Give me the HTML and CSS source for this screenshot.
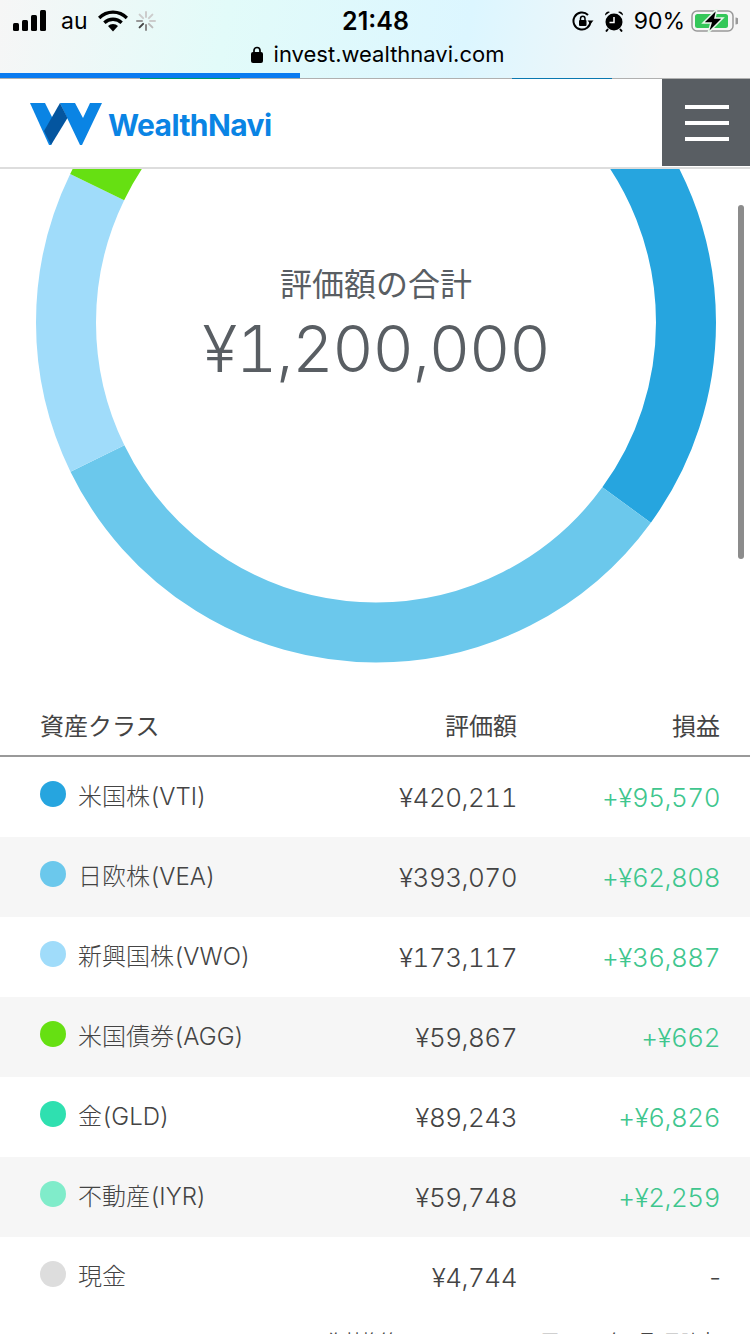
FILE: index.html
```html
<!DOCTYPE html>
<html lang="ja">
<head>
    <meta charset="UTF-8">
    <meta name="viewport" content="width=device-width, initial-scale=1.0">
    <title>WealthNavi</title>
    <link rel="stylesheet" href="styles.css">
</head>
<body>
    <div class="page">
        <div class="browser-bar">
            <div class="status-row">
                <div class="status-left">
                    <svg class="signal" width="34" height="22" viewBox="0 0 34 22"><rect x="0" y="13" width="6" height="8" rx="1.5"/><rect x="9" y="10" width="6" height="11" rx="1.5"/><rect x="18" y="5" width="6" height="16" rx="1.5"/><rect x="27" y="0" width="6" height="21" rx="1.5"/></svg>
                    <span class="carrier">au</span>
                    <svg class="wifi" width="30" height="22" viewBox="0 0 30 22"><path d="M15 21.500l-5-5.500a7 7 0 0 1 10 0z"/><path d="M15 7.500a14 14 0 0 1 9.800 4l-2.300 2.500a10.800 10.800 0 0 0-15 0l-2.300-2.500a14 14 0 0 1 9.800-4z"/><path d="M15 .500a21 21 0 0 1 15 6.200l-2.300 2.500a17.600 17.600 0 0 0-25.400 0L0 6.700a21 21 0 0 1 15-6.200z"/></svg>
                    <svg class="spinner" width="20" height="20" viewBox="0 0 20 20" stroke-width="2" stroke-linecap="round"><path d="M10 1v5" stroke="#ccc"/><path d="M16.400 3.600l-3.500 3.500" stroke="#ccc"/><path d="M19 10h-5" stroke="#ccc"/><path d="M16.400 16.400l-3.500-3.500" stroke="#bbb"/><path d="M10 19v-5" stroke="#888"/><path d="M3.600 16.400l3.500-3.500" stroke="#444"/><path d="M1 10h5" stroke="#999"/><path d="M3.600 3.600l3.500 3.500" stroke="#ccc"/></svg>
                </div>
                <div class="clock">21:48</div>
                <div class="status-right">
                    <svg width="22" height="22" viewBox="0 0 22 22"><path d="M18.500 11a8.500 8.500 0 1 1-2.500-6" fill="none" stroke="#000" stroke-width="2"/><path d="M21.500 10.500h-6l3 3.500z"/><rect x="7" y="10" width="7.500" height="6" rx="1"/><path d="M8.500 10V8.500a2.200 2.200 0 0 1 4.500 0V10" fill="none" stroke="#000" stroke-width="1.500"/></svg>
                    <svg class="alarm" width="20" height="22" viewBox="0 0 20 22"><circle cx="10" cy="12" r="8.500"/><path d="M1 5.500a3.500 3.500 0 0 1 5-3.500zM19 5.500a3.500 3.500 0 0 0-5-3.500z"/><path d="M10 7v5.500H5.500" fill="none" stroke="#fff" stroke-width="1.500"/><path d="M4 19l-2 2.500M16 19l2 2.500" stroke="#000" stroke-width="2"/></svg>
                    <span class="battery-text">90%</span>
                    <svg width="47" height="24" viewBox="0 0 47 24"><rect x="1" y="2" width="41" height="20" rx="5" fill="none" stroke="#999" stroke-width="1.500"/><rect x="4" y="5" width="33" height="14" rx="2.500" fill="#34c759"/><path d="M44.500 8.500a3.500 3.500 0 0 1 0 7z" fill="#999"/><path d="M26 0L12 14h8l-3 10 15-15h-8z" stroke="#e8f8ec" stroke-width="1.500"/></svg>
                </div>
            </div>
            <div class="url-row">
                <svg width="12" height="17" viewBox="0 0 12 17"><rect x="0" y="6" width="12" height="11" rx="2"/><path d="M3 7V4.500a3 3 0 0 1 6 0V7" fill="none" stroke="#000" stroke-width="1.700"/></svg>
                <span>invest.wealthnavi.com</span>
            </div>
            <div class="progress"><div class="progress-fill"></div></div>
            <div class="bar-line"></div>
        </div>

        <header class="site-header">
            <a class="logo">
                <svg width="73" height="43" viewBox="0 0 73 43"><path d="M0 0H15L28 26 21 42H19z" fill="#0a84e4"/><path d="M30 0H45L53 15 60 0H72L52 42H50z" fill="#0a84e4"/><path d="M30 0L37.500 15 21 42 14 28z" fill="#04559f"/></svg>
                <span>WealthNavi</span>
            </a>
            <div class="menu-btn"><i></i><i></i><i></i></div>
        </header>

        <section class="chart">
            <svg class="donut" width="750" height="520" viewBox="0 169 750 520">
                <g fill="none" stroke-width="60" transform="rotate(-90 376 322.500)">
                    <circle cx="376" cy="322.500" r="310" pathLength="100" stroke="#26a5df" stroke-dasharray="35.02 100"/>
                    <circle cx="376" cy="322.500" r="310" pathLength="100" stroke="#6bc8ec" stroke-dasharray="32.75 100" stroke-dashoffset="-35.02"/>
                    <circle cx="376" cy="322.500" r="310" pathLength="100" stroke="#a0dcfa" stroke-dasharray="14.43 100" stroke-dashoffset="-67.77"/>
                    <circle cx="376" cy="322.500" r="310" pathLength="100" stroke="#66e012" stroke-dasharray="4.99 100" stroke-dashoffset="-82.20"/>
                    <circle cx="376" cy="322.500" r="310" pathLength="100" stroke="#2fe0b0" stroke-dasharray="7.44 100" stroke-dashoffset="-87.19"/>
                    <circle cx="376" cy="322.500" r="310" pathLength="100" stroke="#80ecca" stroke-dasharray="4.98 100" stroke-dashoffset="-94.63"/>
                    <circle cx="376" cy="322.500" r="310" pathLength="100" stroke="#dddddd" stroke-dasharray="0.39 100" stroke-dashoffset="-99.61"/>
                </g>
            </svg>
            <div class="total">
                <div class="total-label">評価額の合計</div>
                <div class="total-value">¥1,200,000</div>
            </div>
        </section>

        <table class="assets">
            <thead>
                <tr>
                    <th>資産クラス</th>
                    <th class="num">評価額</th>
                    <th class="num">損益</th>
                </tr>
            </thead>
            <tbody>
                <tr>
                    <td><div class="name"><i class="dot c-vti"></i>米国株(VTI)</div></td>
                    <td class="num">¥420,211</td>
                    <td class="num gain">+¥95,570</td>
                </tr>
                <tr>
                    <td><div class="name"><i class="dot c-vea"></i>日欧株(VEA)</div></td>
                    <td class="num">¥393,070</td>
                    <td class="num gain">+¥62,808</td>
                </tr>
                <tr>
                    <td><div class="name"><i class="dot c-vwo"></i>新興国株(VWO)</div></td>
                    <td class="num">¥173,117</td>
                    <td class="num gain">+¥36,887</td>
                </tr>
                <tr>
                    <td><div class="name"><i class="dot c-agg"></i>米国債券(AGG)</div></td>
                    <td class="num">¥59,867</td>
                    <td class="num gain">+¥662</td>
                </tr>
                <tr>
                    <td><div class="name"><i class="dot c-gld"></i>金(GLD)</div></td>
                    <td class="num">¥89,243</td>
                    <td class="num gain">+¥6,826</td>
                </tr>
                <tr>
                    <td><div class="name"><i class="dot c-iyr"></i>不動産(IYR)</div></td>
                    <td class="num">¥59,748</td>
                    <td class="num gain">+¥2,259</td>
                </tr>
                <tr>
                    <td><div class="name"><i class="dot c-cash"></i>現金</div></td>
                    <td class="num">¥4,744</td>
                    <td class="num dash">-</td>
                </tr>
            </tbody>
        </table>
        <div class="note">為替換算レート 1ドル=107円 2020年5月1日時点</div>

        <div class="scrollbar"></div>
    </div>
</body>
</html>
```

FILE: styles.css
```css
html, body {
    margin: 0;
    padding: 0;
}
body {
    font-family: Inter, "Noto Sans CJK JP", sans-serif;
    background-color: white;
    color: #444;
}
.page {
    position: relative;
    width: 750px;
    height: 1334px;
    overflow: hidden;
}

/* browser chrome */
.browser-bar {
    position: relative;
    height: 79px;
    background: linear-gradient(100deg, #f6f6f6 0%, #e2fbf9 30%, #dcf6ff 62%, #f6f6f6 88%);
    color: #000;
}
.status-row {
    display: grid;
    grid-template-columns: 1fr auto 1fr;
    align-items: center;
    height: 41px;
    padding: 0 12px 0 13px;
}
.status-left {
    display: flex;
    align-items: center;
}
.carrier {
    font-size: 23px;
    margin-left: 14px;
}
.wifi {
    margin-left: 10px;
}
.spinner {
    margin-left: 8px;
}
.clock {
    font-size: 25px;
    font-weight: 600;
}
.status-right {
    display: flex;
    align-items: center;
    justify-content: flex-end;
}
.alarm {
    margin-left: 10px;
}
.battery-text {
    font-size: 23px;
    margin-left: 10px;
    margin-right: 6px;
}
.url-row {
    display: flex;
    align-items: center;
    justify-content: center;
    gap: 11px;
    height: 26px;
    margin-bottom: 6px;
    padding-left: 5px;
    font-size: 22px;
}
.progress {
    height: 5px;
}
.progress-fill {
    width: 300px;
    height: 5px;
    background-color: #0a7bf0;
}
.bar-line {
    height: 1px;
    background: linear-gradient(90deg, #b0b0b0 140px, #009a6a 140px, #009a6a 240px, #b0b0b0 240px, #b0b0b0 512px, #0a78b0 512px, #0a78b0 612px, #b0b0b0 612px);
}

/* site header */
.site-header {
    display: flex;
    align-items: stretch;
    justify-content: space-between;
    height: 88px;
    border-bottom: 2px solid #ddd;
}
.logo {
    display: flex;
    align-items: flex-end;
    gap: 5px;
    height: 67px;
    padding-left: 30px;
    color: #0a84e4;
    font-size: 30px;
    font-weight: 700;
    letter-spacing: -0.6px;
}
.logo span {
    line-height: 36px;
    margin-bottom: 3px;
}
.menu-btn {
    display: flex;
    flex-direction: column;
    justify-content: center;
    align-items: center;
    gap: 12px;
    width: 88px;
    margin-bottom: 1px;
    padding-left: 2px;
    box-sizing: border-box;
    background-color: #595e63;
}
.menu-btn i {
    display: block;
    width: 44px;
    height: 4px;
    background-color: white;
}

/* donut */
.chart {
    position: relative;
    height: 531px;
}
.donut {
    display: block;
}
.total {
    position: absolute;
    top: 92px;
    left: 0;
    width: 752px;
    text-align: center;
    color: #595e63;
}
.total-label {
    font-size: 32px;
    line-height: 48px;
}
.total-value {
    font-size: 64px;
    line-height: 80px;
    font-weight: 300;
    letter-spacing: -1.2px;
    font-variant-numeric: tabular-nums;
}

/* table */
.assets {
    width: 100%;
    border-collapse: collapse;
}
.assets th {
    height: 56px;
    padding: 0 0 6px 40px;
    font-size: 24px;
    font-weight: 400;
    text-align: left;
    border-bottom: 2px solid #999;
    box-sizing: border-box;
}
.assets td {
    height: 80px;
    padding: 0 0 0 40px;
    font-size: 26px;
    font-weight: 300;
    letter-spacing: -0.5px;
    font-variant-numeric: tabular-nums;
}
.assets tbody tr:nth-child(even) {
    background-color: #f6f6f6;
}
.assets td.num {
    text-align: right;
    padding: 0 30px 0 0;
}
.assets td.dash {
    padding-right: 27px;
}
.assets th.num {
    text-align: right;
    padding: 0 30px 6px 0;
}
.assets .num:nth-child(2) {
    width: 172px;
}
.assets .num:nth-child(3) {
    width: 173px;
}
.gain {
    color: #3fc68e;
}
.name {
    display: flex;
    align-items: center;
    font-size: 24px;
    letter-spacing: 0;
    height: 80px;
    padding-bottom: 6px;
    box-sizing: border-box;
}
.dot {
    display: block;
    width: 26px;
    height: 26px;
    border-radius: 50%;
    margin-right: 12px;
}
.c-vti { background-color: #26a5df; }
.c-vea { background-color: #6bc8ec; }
.c-vwo { background-color: #a0dcfa; }
.c-agg { background-color: #66e012; }
.c-gld { background-color: #2fe0b0; }
.c-iyr { background-color: #80ecca; }
.c-cash { background-color: #dddddd; }

.note {
    margin-top: 10px;
    padding-right: 33px;
    text-align: right;
    font-size: 18px;
}
.scrollbar {
    position: absolute;
    top: 205px;
    left: 738px;
    width: 6px;
    height: 354px;
    border-radius: 3px;
    background-color: #8c8c8c;
}
```
